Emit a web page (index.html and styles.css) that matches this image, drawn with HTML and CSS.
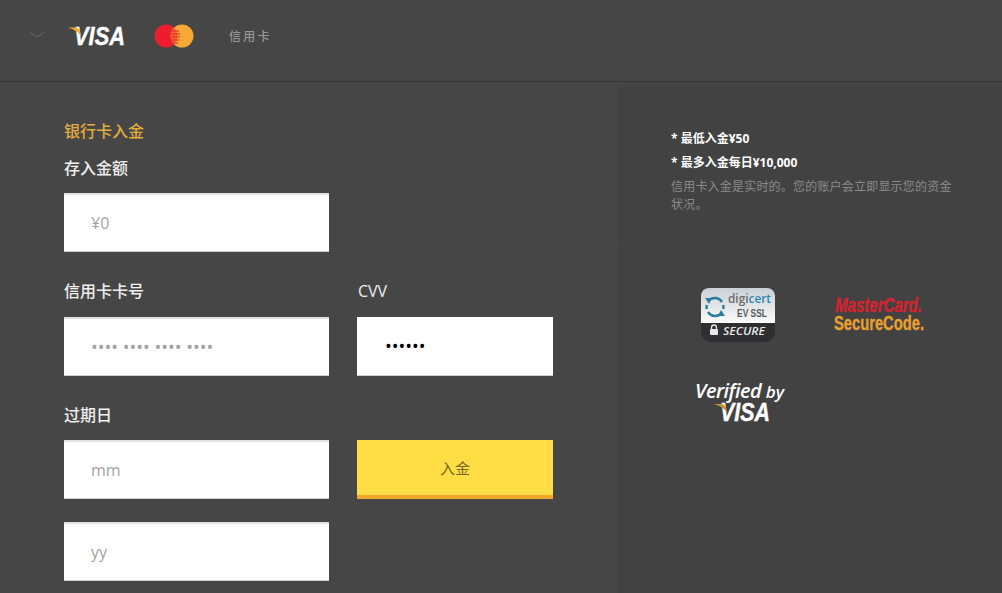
FILE: index.html
```html
<!doctype html>
<html>
<head>
    <meta charset="utf-8">
    <title>银行卡入金</title>
    <link rel="stylesheet" href="styles.css">
</head>
<body>
<div class="header">
    <svg class="chevron" width="16" height="6" viewBox="0 0 16 6"><path d="M1 .5 8 5l7-4.500" fill="none" stroke="#5f5f5f" stroke-width="1.200"/></svg>
    <svg class="visaLogo" width="58" height="32" viewBox="0 -5 58 32">
        <text x="6" y="19.500" textLength="51" lengthAdjust="spacingAndGlyphs" class="visaText">VISA</text>
        <path d="M0 2.500h7c3 0 4 1 5 4l1.500 5C10.500 7.500 6 4 0 2.500z" fill="#f2ad2e"/>
    </svg>
    <svg class="mcLogo" width="40" height="24" viewBox="0 0 40 24">
        <circle cx="12" cy="12" r="11.500" fill="#ed1c2e"/>
        <circle cx="28" cy="12" r="11.500" fill="#f7a733"/>
        <path d="M20 3.800a11.500 11.500 0 0 0 0 16.400a11.500 11.500 0 0 0 0-16.400z" fill="#f26a2a"/>
        <path d="M15 7h10M14 10h12M14 13h12M15 16h10M16 19h8" stroke="#ed1c2e" stroke-width="1"/>
    </svg>
    <span class="cardName">信用卡</span>
</div>
<div class="main">
    <div class="formPane">
        <div class="formTitle">银行卡入金</div>
        <label class="fieldLabel">存入金额</label>
        <input class="textInput inputWide" type="text" placeholder="¥0">
        <div class="fieldRow cardRow">
            <div class="fieldCol">
                <label class="fieldLabel">信用卡卡号</label>
                <input class="textInput inputWide inputCard" type="text" placeholder="•••• •••• •••• ••••">
            </div>
            <div class="fieldCol">
                <label class="fieldLabel labelCvv">CVV</label>
                <input class="textInput inputCvv" type="password" value="123456">
            </div>
        </div>
        <div class="fieldRow">
            <div class="fieldCol">
                <label class="fieldLabel">过期日</label>
                <input class="textInput inputWide inputMonth" type="text" placeholder="mm">
                <input class="textInput inputWide" type="text" placeholder="yy">
            </div>
            <div class="fieldCol buttonCol">
                <button class="depositButton" type="button">入金</button>
            </div>
        </div>
    </div>
    <div class="sidePane">
        <div class="notes">
            <p class="noteStrong">* 最低入金¥50</p>
            <p class="noteStrong">* 最多入金每日¥10,000</p>
            <p class="noteText">信用卡入金是实时的。您的账户会立即显示您的资金状况。</p>
        </div>
        <div class="badges">
            <svg class="badgeDigicert" width="76" height="56" viewBox="0 0 76 56">
                <defs>
                    <linearGradient id="certBg" x1="0" y1="0" x2="0" y2="1">
                        <stop offset="0" stop-color="#c9d0d4"/>
                        <stop offset="1" stop-color="#fbfbfb"/>
                    </linearGradient>
                </defs>
                <path d="M1 36V9a8 8 0 0 1 8-8h58a8 8 0 0 1 8 8v27z" fill="url(#certBg)"/>
                <path d="M1 36h74v9a10 10 0 0 1-10 10H11A10 10 0 0 1 1 45z" fill="#2f2f31"/>
                <path d="M8 14.500a8.500 8.500 0 0 1 14 .5M22 25.500a8.500 8.500 0 0 1-14-.5M6.800 22a8.500 8.500 0 0 1 0-4M23.200 18a8.500 8.500 0 0 1 0 4" fill="none" stroke="#2a7f9f" stroke-width="2.500"/>
                <path d="M5 11h7l-3 6zM25 29h-7l3-6z" fill="#2a7f9f"/>
                <text x="28" y="16" textLength="43" lengthAdjust="spacingAndGlyphs" class="certDigi">digi<tspan fill="#2a86b0">cert</tspan></text>
                <text x="37" y="30" textLength="30" lengthAdjust="spacingAndGlyphs" class="certEv">EV SSL</text>
                <rect x="10" y="42" width="8" height="6" rx="1" fill="#e8e8e8"/>
                <path d="M11.500 42v-1.500a2.500 2.500 0 0 1 5 0v1.500" fill="none" stroke="#e8e8e8" stroke-width="1.300"/>
                <text x="23" y="48" textLength="42" lengthAdjust="spacingAndGlyphs" class="certSecure">SECURE</text>
            </svg>
            <svg class="badgeSecureCode" width="92" height="44" viewBox="0 0 92 44">
                <text x="1" y="20" textLength="87" lengthAdjust="spacingAndGlyphs" class="mcRed">MasterCard.</text>
                <text x="0" y="38" textLength="90" lengthAdjust="spacingAndGlyphs" class="mcOrange">SecureCode.</text>
            </svg>
            <div class="badgeVerified">
                <div class="verifiedBy"><span class="verifiedWord">Verified</span> by</div>
                <svg class="verifiedVisa" width="58" height="30" viewBox="0 -4 58 30">
                    <text x="6" y="19" textLength="50" lengthAdjust="spacingAndGlyphs" class="visaText">VISA</text>
                    <path d="M0 2h7c3 0 4 1 5 4l1.500 5C10.500 7 6 3.500 0 2z" fill="#c9973a"/>
                </svg>
            </div>
        </div>
    </div>
</div>
</body>
</html>
```

FILE: styles.css
```css
html, body {
    margin: 0;
    height: 593px;
    overflow: hidden;
}

body {
    background-color: #464646;
    color: #f0f0f0;
    font-family: "Open Sans", "Noto Sans CJK SC", sans-serif;
    font-size: 16px;
}

svg {
    overflow: visible;
}

.header {
    height: 81px;
    display: flex;
    align-items: center;
    border-bottom: 1px solid #363636;
    padding-left: 29px;
}

.chevron {
    margin-right: 23px;
    margin-top: -11px;
}

.visaLogo {
    margin-right: 28px;
    margin-top: -9px;
}

.visaText {
    font-family: "Liberation Sans", sans-serif;
    font-size: 25px;
    font-style: italic;
    font-weight: bold;
    fill: #fff;
    stroke: #fff;
    stroke-width: 0.4px;
}

.mcLogo {
    margin-right: 35px;
    margin-top: -9px;
}

.cardName {
    color: #979797;
    font-size: 12px;
    font-weight: 500;
    letter-spacing: 2.2px;
    margin-top: -9px;
}

.main {
    display: flex;
}

.formPane {
    width: 554px;
    padding: 39px 0 0 64px;
}

.formTitle {
    color: #e2ab3e;
    font-weight: 500;
    height: 20px;
    line-height: 20px;
    margin-bottom: 17px;
}

.fieldLabel {
    display: block;
    height: 20px;
    line-height: 20px;
    margin-bottom: 15px;
    font-weight: 500;
}

.cardRow .fieldLabel {
    margin-bottom: 16px;
}

.labelCvv {
    margin-left: 1px;
}

.textInput {
    display: block;
    height: 59px;
    box-sizing: border-box;
    padding: 0 0 0 27px;
    background-color: #fff;
    border: 0;
    border-top: 2px solid #e2e2e2;
    border-bottom: 1px solid #cfcfcf;
    border-radius: 0;
    outline: none;
    font-family: "Open Sans", "Noto Sans CJK SC", sans-serif;
    font-size: 16px;
}

.textInput::placeholder {
    color: #a3a3a3;
}

.inputWide {
    width: 265px;
}

.inputCard {
    font-size: 18px;
}

.inputCvv {
    width: 196px;
    border-top: 0;
    padding-left: 28px;
    color: #000;
    font-size: 18px;
}

.inputMonth {
    margin-bottom: 23px;
}

.fieldRow {
    display: flex;
    gap: 28px;
    margin-top: 29px;
}

.buttonCol {
    padding-top: 35px;
}

.depositButton {
    display: block;
    width: 196px;
    height: 59px;
    background-color: #ffdd44;
    border: 0;
    border-bottom: 4px solid #f2a62b;
    color: #77681f;
    font-family: "Noto Sans CJK SC", sans-serif;
    font-size: 15px;
}

.sidePane {
    width: 384px;
    margin-top: 4px;
    min-height: 508px;
    background-color: #424242;
}

.notes {
    box-sizing: border-box;
    height: 159px;
    padding: 44px 48px 0 53px;
    border-bottom: 1px solid #454545;
}

.notes p {
    margin: 0;
    font-size: 12px;
    line-height: 18px;
}

.notes .noteStrong {
    color: #fff;
    font-weight: bold;
    margin-bottom: 6px;
}

.noteText {
    color: #8b8b8b;
    letter-spacing: 0.2px;
}

.badges {
    display: flex;
    flex-wrap: wrap;
    align-items: flex-start;
    padding: 42px 0 0 77px;
}

.badgeDigicert {
    margin: 0 58px 38px 5px;
}

.certDigi {
    font-size: 13px;
    font-weight: 600;
    fill: #6c6c6c;
}

.certEv {
    font-family: "Liberation Sans", sans-serif;
    font-size: 11px;
    font-weight: bold;
    fill: #5a5a5a;
}

.certSecure {
    font-size: 11px;
    font-style: italic;
    font-weight: 600;
    fill: #e6e6e6;
}

.badgeSecureCode {
    margin-top: 5px;
    margin-bottom: -6px;
    font-family: "Liberation Sans", sans-serif;
    font-weight: bold;
}

.mcRed {
    font-size: 21px;
    font-style: italic;
    fill: #d5232f;
    stroke: #d5232f;
    stroke-width: 0.4px;
}

.mcOrange {
    font-size: 20px;
    fill: #e8a02f;
    stroke: #e8a02f;
    stroke-width: 0.3px;
}

.badgeVerified {
    width: 100%;
    color: #fff;
    font-family: "Open Sans", sans-serif;
    font-style: italic;
    font-weight: 600;
    line-height: 20px;
}

.verifiedWord {
    font-size: 20px;
    letter-spacing: -0.5px;
}

.verifiedBy {
    font-size: 17px;
    height: 20px;
}

.verifiedVisa {
    display: block;
    margin-left: 19px;
    margin-top: -3px;
}
```
